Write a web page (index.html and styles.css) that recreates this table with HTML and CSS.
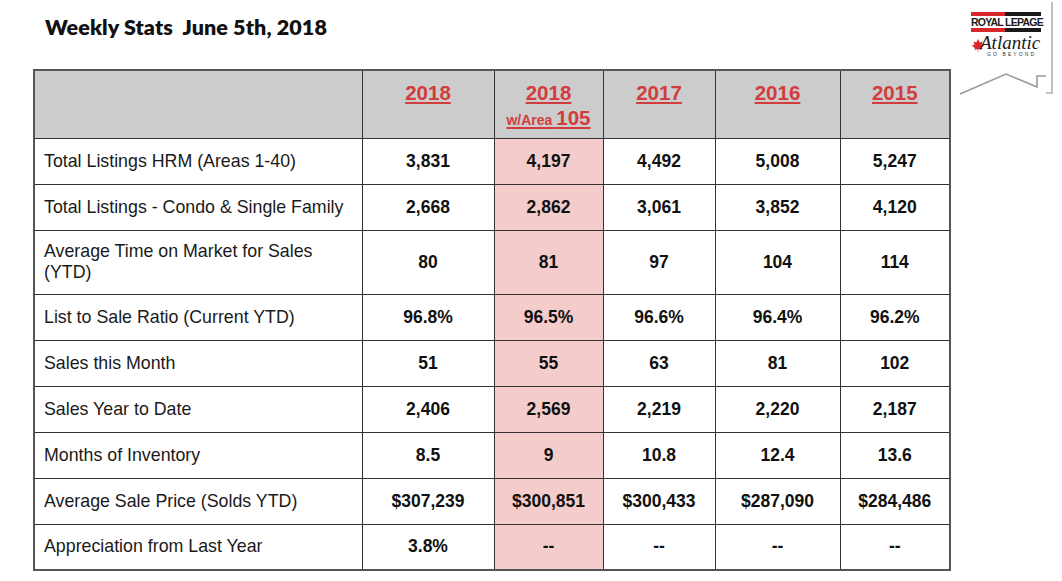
FILE: index.html
```html
<!DOCTYPE html>
<html lang="en">
<head>
<meta charset="utf-8">
<title>Weekly Stats June 5th, 2018</title>
<link rel="stylesheet" href="styles.css">
</head>
<body>
<div class="page">
  <div class="main">
    <h1 class="title">Weekly Stats&nbsp; June 5th, 2018</h1>
    <table class="stats">
      <colgroup>
        <col class="c-label"><col class="c-a"><col class="c-b"><col class="c-c"><col class="c-d"><col class="c-e">
      </colgroup>
      <thead>
        <tr class="head">
          <th></th>
          <th><span class="yr">2018</span></th>
          <th class="hl-head"><span class="yr">2018</span><br><span class="area">w/Area <span class="big">105</span></span></th>
          <th><span class="yr">2017</span></th>
          <th><span class="yr">2016</span></th>
          <th><span class="yr">2015</span></th>
        </tr>
      </thead>
      <tbody>
        <tr><td class="label">Total Listings HRM (Areas 1-40)</td><td>3,831</td><td class="hl">4,197</td><td>4,492</td><td>5,008</td><td>5,247</td></tr>
        <tr><td class="label">Total Listings - Condo &amp; Single Family</td><td>2,668</td><td class="hl">2,862</td><td>3,061</td><td>3,852</td><td>4,120</td></tr>
        <tr class="tall"><td class="label">Average Time on Market for Sales (YTD)</td><td>80</td><td class="hl">81</td><td>97</td><td>104</td><td>114</td></tr>
        <tr><td class="label">List to Sale Ratio (Current YTD)</td><td>96.8%</td><td class="hl">96.5%</td><td>96.6%</td><td>96.4%</td><td>96.2%</td></tr>
        <tr><td class="label">Sales this Month</td><td>51</td><td class="hl">55</td><td>63</td><td>81</td><td>102</td></tr>
        <tr><td class="label">Sales Year to Date</td><td>2,406</td><td class="hl">2,569</td><td>2,219</td><td>2,220</td><td>2,187</td></tr>
        <tr><td class="label">Months of Inventory</td><td>8.5</td><td class="hl">9</td><td>10.8</td><td>12.4</td><td>13.6</td></tr>
        <tr><td class="label">Average Sale Price (Solds YTD)</td><td>$307,239</td><td class="hl">$300,851</td><td>$300,433</td><td>$287,090</td><td>$284,486</td></tr>
        <tr><td class="label">Appreciation from Last Year</td><td>3.8%</td><td class="hl">--</td><td>--</td><td>--</td><td>--</td></tr>
      </tbody>
    </table>
  </div>
  <div class="brand">
    <svg class="roof" width="112" height="110" viewBox="0 0 112 110" aria-hidden="true">
      <polyline points="10,94 56,74 87,87 87,76 96,76" fill="none" stroke="#9a9a9a" stroke-width="1.6"/>
      <polyline points="102,2 102,93 96,93" fill="none" stroke="#b0b0b0" stroke-width="1.6"/>
    </svg>
    <div class="logo">
      <div class="lp">ROYAL LEPAGE</div>
      <div class="atl">
        <svg class="leaf" width="14" height="15" viewBox="0 0 14 15" aria-hidden="true">
          <polygon points="7,0 8.8,3.5 11.5,2.5 10.5,6 13.5,6.5 10,9 10.5,11 7.5,10 7,14 6.5,10 3.5,11 4,9 0.5,6.5 3.5,6 2.5,2.5 5.2,3.5" fill="#d9262c"/>
        </svg>
        <span class="atl-txt">Atlantic</span>
      </div>
      <div class="go">GO BEYOND</div>
    </div>
  </div>
</div>
</body>
</html>
```

FILE: styles.css
```css
* { box-sizing: border-box; }
html, body { margin: 0; padding: 0; background: #ffffff; }
body { font-family: "Liberation Sans", Arial, sans-serif; color: #111; }

.page {
  display: flex;
  align-items: flex-start;
  width: 1062px;
  height: 581px;
  overflow: hidden;
}

.main {
  padding-left: 33px;
  width: 950px;
  flex: none;
}

.title {
  margin: 0;
  padding: 14px 0 0 12px;
  height: 69px;
  font-family: "Lato", "Open Sans", sans-serif;
  font-weight: 800;
  font-size: 21.5px;
  line-height: 26px;
  color: #111;
  letter-spacing: 0.1px;
}

.stats {
  border-collapse: collapse;
  table-layout: fixed;
  width: 916px;
  border: 2px solid #555;
}
.c-label { width: 328px; }
.c-a { width: 132px; }
.c-b { width: 109px; }
.c-c { width: 112px; }
.c-d { width: 125px; }
.c-e { width: 110px; }

.stats th, .stats td {
  border: 1.5px solid #333;
  padding: 0;
  text-align: center;
  vertical-align: middle;
}

.head { height: 68px; background: #cccccc; }
.head th { vertical-align: top; padding-top: 10px; line-height: 23px; }
.yr {
  color: #d23c3c;
  font-weight: 700;
  font-size: 20.5px;
  text-decoration: underline;
  text-decoration-thickness: 1.5px;
  text-underline-offset: 2px;
}
.area {
  color: #d23c3c;
  font-weight: 700;
  font-size: 14px;
  text-decoration: underline;
  text-decoration-thickness: 1.5px;
  text-underline-offset: 2px;
}
.area .big { font-size: 20.5px; }

.stats tbody tr { height: 46px; }
.stats tbody tr.tall { height: 64px; }

.stats td {
  font-size: 17.5px;
  font-weight: 700;
  color: #111;
}
.stats td.label {
  text-align: left;
  font-weight: 400;
  font-size: 17.8px;
  line-height: 21px;
  padding: 0 10px 0 9px;
  color: #1a1a1a;
}
.stats td.hl { background: #f4cccc; }

/* brand block: roof outline and logo share one grid cell */
.brand {
  flex: none;
  width: 112px;
  display: grid;
}
.brand > * { grid-area: 1 / 1; }
.roof { display: block; }

.logo {
  align-self: start;
  margin: 12px 0 0 21px;
  width: 70px;
  display: flex;
  flex-direction: column;
  position: relative;
  z-index: 1;
}
/* red/black rules above and below the wordmark, drawn as borders */
.lp {
  font-weight: 700;
  font-size: 10.5px;
  line-height: 11px;
  padding: 1px 0 0;
  border-top: 4px solid #d9262c;
  border-bottom: 4px solid #d9262c;
  border-image: linear-gradient(90deg, #d9262c 0 48%, #1a1a1a 48% 100%) 1;
  white-space: nowrap;
  color: #1a1a1a;
  letter-spacing: -0.75px;
}
.atl {
  display: flex;
  align-items: flex-start;
  height: 17px;
  margin-top: 2px;
}
.leaf { display: block; margin-top: 5px; flex: none; margin-right: -5px; }
.atl-txt {
  font-family: "Liberation Serif", "Times New Roman", serif;
  font-style: italic;
  font-size: 19px;
  line-height: 17px;
  color: #1a1a1a;
}
.go {
  font-size: 5px;
  line-height: 6px;
  letter-spacing: 2.1px;
  padding-left: 16px;
  white-space: nowrap;
  color: #333;
}
```
